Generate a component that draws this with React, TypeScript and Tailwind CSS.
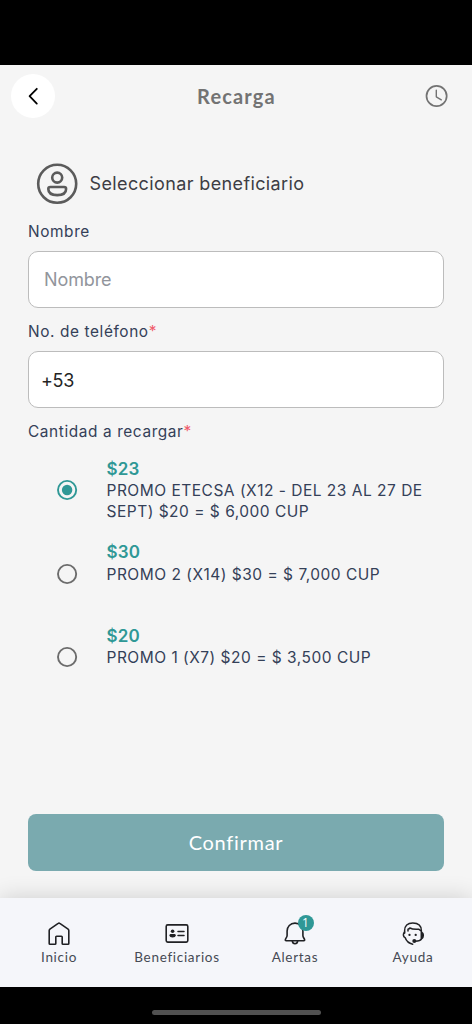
import type { ReactNode } from "react";

const promos = [
  { price: "$23", lines: ["PROMO ETECSA (X12 - DEL 23 AL 27 DE", "SEPT) $20 = $ 6,000 CUP"], selected: true },
  { price: "$30", lines: ["PROMO 2 (X14) $30 = $ 7,000 CUP"], selected: false },
  { price: "$20", lines: ["PROMO 1 (X7) $20 = $ 3,500 CUP"], selected: false },
];

function Header() {
  return (
    <header className="flex h-[61px] items-center justify-between pl-[11px] pr-[24px]">
      <button aria-label="Volver" className="flex size-[44px] items-center justify-center rounded-full bg-white">
        <svg width="44" height="44" viewBox="0 0 44 44" fill="none" stroke="#000" strokeWidth="1.8" strokeLinecap="round" strokeLinejoin="round">
          <path d="M25.8 14.8 18.6 22.2 25.8 29.6" />
        </svg>
      </button>
      <h1 className="ml-[-6px] font-['Lato',sans-serif] text-[20px] leading-[24px] font-bold tracking-[1.15px] text-[#737373]">Recarga</h1>
      <svg width="24" height="24" viewBox="0 0 24 24" fill="none" stroke="#737373" strokeLinecap="round" strokeLinejoin="round">
        <circle cx="12.6" cy="12" r="10.1" strokeWidth="1.7" />
        <path d="M12.3 6.3v6.5l5 3" strokeWidth="1.4" />
      </svg>
    </header>
  );
}

function Label({ children, required }: { children: ReactNode; required?: boolean }) {
  return (
    <div className="h-[20px] text-[15.4px] leading-[20px] tracking-[0.6px] whitespace-nowrap text-[#344058]">
      {children}
      {required && <span className="text-[#f05b6b]">*</span>}
    </div>
  );
}

function Radio({ selected }: { selected: boolean }) {
  return (
    <svg className="mt-[21px] shrink-0" width="22" height="22" viewBox="0 0 22 22" fill="none">
      <circle cx="11.1" cy="11" r="9.1" stroke={selected ? "#2f9896" : "#6c6c6c"} strokeWidth="1.9" />
      {selected && <circle cx="11.1" cy="11" r="5.2" fill="#2f9896" />}
    </svg>
  );
}

function NavItem({ label, children }: { label: string; children: ReactNode }) {
  return (
    <div className="flex w-[118px] flex-col items-center pt-[23px]">
      <div className="relative h-[24px] w-[24px]">{children}</div>
      <span className="mt-[3px] font-['Lato',sans-serif] text-[13.5px] leading-[18px] tracking-[0.7px] text-[#464a54]">{label}</span>
    </div>
  );
}

export default function App() {
  return (
    <div className="flex h-[1024px] w-[472px] flex-col overflow-hidden bg-black font-['Inter',sans-serif]">
      <div className="h-[65px] shrink-0" />
      <main className="flex h-[833px] shrink-0 flex-col bg-[#f5f5f5]">
        <Header />
        <div className="flex flex-col px-[28px] pt-[36px]">
          <div className="flex h-[43px] items-center pl-[8px]">
            <svg width="42" height="42" viewBox="0 0 42 42" fill="none" stroke="#5b5b5b" strokeWidth="2.6">
              <circle cx="21.2" cy="20.8" r="19" />
              <circle cx="21.2" cy="14.6" r="5" />
              <path d="M14.3 24h13.800a2 2 0 0 1 2 2c0 4.500-4.400 6.100-8.900 6.100s-8.900-1.600-8.900-6.100a2 2 0 0 1 2-2Z" />
            </svg>
            <span className="ml-[11.5px] text-[18px] leading-[24px] tracking-[0.38px] text-[#3d3d44]">Seleccionar beneficiario</span>
          </div>
          <div className="mt-[17px]"><Label>Nombre</Label></div>
          <input aria-label="Nombre" placeholder="Nombre" className="mt-[9px] h-[57px] rounded-[10px] border border-[#bcbcbc] bg-white px-[15px] text-[18px] tracking-[-0.1px] placeholder:text-[#92959c]" />
          <div className="mt-[14px]"><Label required>No. de teléfono</Label></div>
          <input aria-label="Teléfono" defaultValue="+53" className="mt-[9px] h-[57px] rounded-[10px] border border-[#bcbcbc] bg-white px-[12px] pt-[1px] text-[18px] tracking-[-0.3px] text-[#242424]" />
          <div className="mt-[14px]"><Label required>Cantidad a recargar</Label></div>
          <div className="mt-[16px] flex flex-col">
            {promos.map((promo) => (
              <div key={promo.price} className="flex h-[83.5px] pl-[28px]">
                <Radio selected={promo.selected} />
                <div className="ml-[28.5px] whitespace-nowrap">
                  <div className="pt-[0.5px] text-[17px] leading-[21px] font-semibold tracking-[0.15px] text-[#2f9896]">{promo.price}</div>
                  <div className="pt-[0.5px] text-[15.5px] leading-[21px] tracking-[0.5px] text-[#344058]">
                    {promo.lines.map((line) => <div key={line}>{line}</div>)}
                  </div>
                </div>
              </div>
            ))}
          </div>
        </div>
        <button className="mx-[28px] mt-auto mb-[27px] h-[57px] shrink-0 rounded-[8px] bg-[#7aaaaf] pb-[2px] font-['Lato',sans-serif] text-[20px] tracking-[0.7px] text-white">Confirmar</button>
      </main>
      <nav className="z-10 flex h-[88.5px] shrink-0 bg-[#f5f6fa] shadow-[0_0_22px_rgba(0,0,0,0.16)]">
        <NavItem label="Inicio">
          <svg width="24" height="24" viewBox="0 0 24 24" fill="none" stroke="#202124" strokeWidth="1.6" strokeLinejoin="round" strokeLinecap="round">
            <path d="M2.2 9.6Q2.2 8.8 2.9 8.2L11.2 2.400Q12 1.800 12.8 2.400L21.100 8.200Q21.800 8.800 21.800 9.600V22.400Q21.800 23.200 21 23.200H16Q15.200 23.200 15.200 22.400V16Q15.200 15.200 14.400 15.200H9.600Q8.800 15.200 8.800 16V22.400Q8.800 23.200 8 23.200H3Q2.200 23.200 2.200 22.400Z" />
          </svg>
        </NavItem>
        <NavItem label="Beneficiarios">
          <svg width="24" height="24" viewBox="0 0 24 24" fill="none" stroke="#202124">
            <rect x="1.2" y="3.9" width="21.6" height="17.2" rx="1.5" strokeWidth="1.6" />
            <circle cx="7.6" cy="10.3" r="1.8" fill="#202124" stroke="none" />
            <path d="M5.700 13.100h3.800q1.200 0 1.200 1.200c0 1.400-1.400 2.200-3.100 2.200s-3.100-.8-3.100-2.200Q4.500 13.100 5.700 13.100Z" fill="#202124" stroke="none" />
            <path d="M13 10.500h6M13 14.500h6" strokeWidth="1.5" strokeLinecap="round" />
          </svg>
        </NavItem>
        <NavItem label="Alertas">
          <svg width="24" height="24" viewBox="0 0 24 24" fill="none" stroke="#202124" strokeWidth="1.6" strokeLinecap="round" strokeLinejoin="round">
            <path d="M12 2.100C7.200 2.100 4.100 5.700 4.100 10v4.400c0 1.700-1.200 2.500-1.700 4Q2 19.700 3.200 19.700H20.800Q22 19.700 21.500 18.400C20.900 16.900 19.900 16.100 19.900 14.400V10C19.900 5.700 16.800 2.100 12 2.100Z" />
            <path d="M9.300 19.900c.2 1.900 1.200 2.800 2.700 2.800s2.500-.9 2.700-2.800" />
          </svg>
          <span className="absolute top-[-6px] left-[14.500px] flex size-[16px] items-center justify-center rounded-full bg-[#2f9896] font-['Open_Sans',sans-serif] text-[12px] leading-[16px] text-white">1</span>
        </NavItem>
        <NavItem label="Ayuda">
          <svg width="24" height="24" viewBox="0 0 24 24" fill="none" stroke="#202124" strokeWidth="1.5" strokeLinecap="round" strokeLinejoin="round">
            <path d="M3.600 12.300V9.700C3.600 4.800 6.500 2.100 11.800 2.100s8.600 2.900 8.600 7.800v8q-1 2.300-6.300 2.300" />
            <path d="M3.600 11q-1.300 1.200-1.200 3.100.2 1.800 1.700 2.500c1.100 3.200 3.700 5.900 7.600 6.600" />
            <path d="M7 9.900V8.300q1.300-.3 1.900-1.300c2.500 1.500 6 1.400 8.700 1.200l2.500 1.600" />
            <path d="M20.600 11.400q1.700.4 1.700 3.100t-1.700 3.200Z" fill="#202124" />
            <circle cx="8.500" cy="13.900" r="1.150" fill="#202124" stroke="none" />
            <circle cx="14.700" cy="13.900" r="1.150" fill="#202124" stroke="none" />
            <ellipse cx="13.300" cy="20" rx="2" ry="1.900" fill="#202124" stroke="none" />
          </svg>
        </NavItem>
      </nav>
      <div className="flex flex-1 justify-center pt-[23px]">
        <div className="h-[5px] w-[169px] rounded-full bg-[#515151]" />
      </div>
    </div>
  );
}
